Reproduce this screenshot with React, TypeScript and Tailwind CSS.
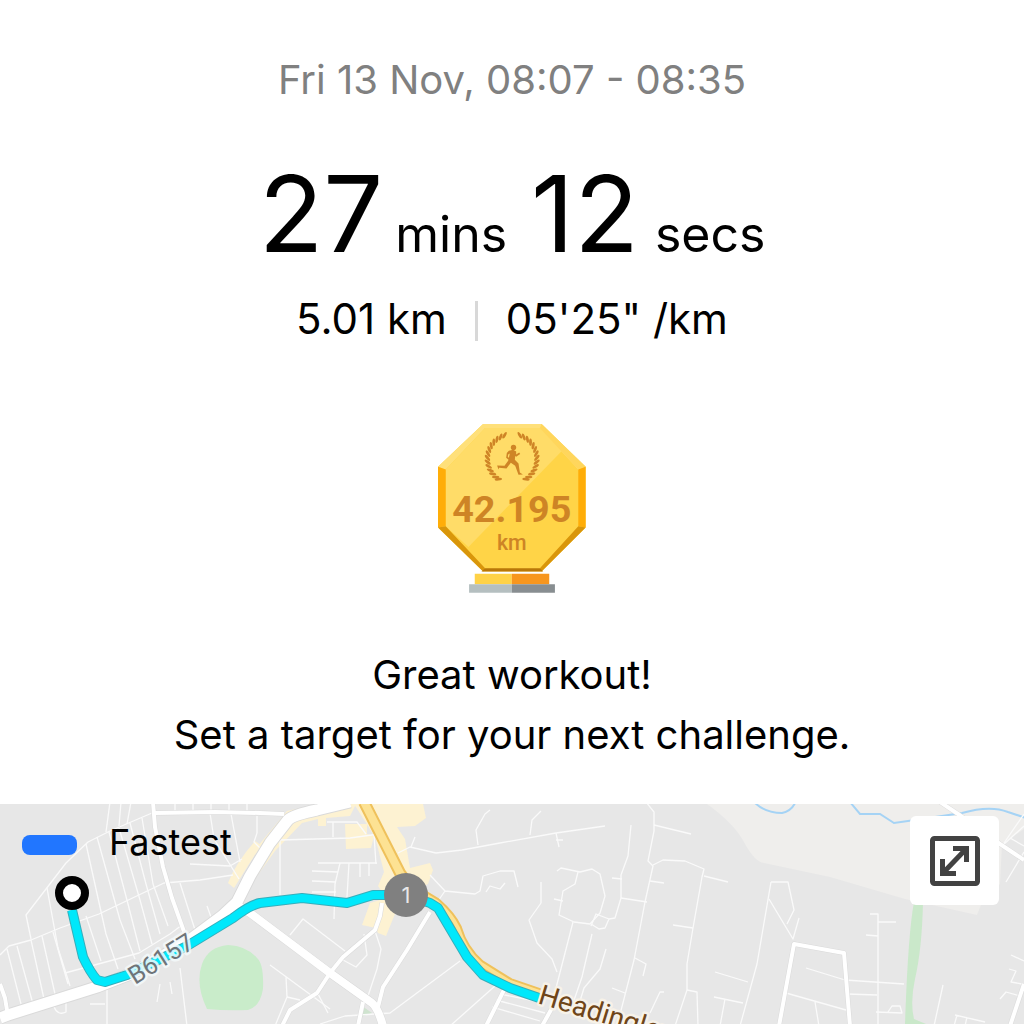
const laurelAngles = [18, 28, 38, 48, 58, 68, 78, 88, 98, 108, 118, 128, 138, 146];

const mainRoad =
  "M0 214 L8 211 L97 183 L133 169 L187 138 L222 112 L237 98 L250 72 L270 39 L288 16 Q293 11 317 6 L350 -2";

const crossRoad = "M235 100 L250 109 L330 169 L372 199 Q378 204 383 222";

const highway = "M364 -2 L400 69 L414 88";

const highwaySouth = "M414 84 L437 98 Q452 111 458 124 Q464 145 481 160 L510 178 L545 190";

const mediumRoads = [
  "M153 -2 L155 23 L163 63 L172 94 L187 136",
  "M155 9 L215 8 L260 9 L284 10",
  "M382 99 L380 112 L375 126 L343 153 L330 169 L317 189 L290 206 L282 222",
  "M430 108 L407 146 L383 183 L378 203",
  "M363 198 L358 222",
  "M779 222 L794 140 L844 149 L850 222",
  "M940 -2 L958 10 L1000 40 L1024 56",
  "M0 180 L5 194 L8 212",
  "M1024 180 L1010 222",
  "M504 186 L486 222",
  "M552 204 L542 222",
];

const streets = [
  // west
  "M152 9 L110 27 L88 38 L66 59 L26 111 L31 135",
  "M0 151 L9 142 L31 136 L60 124 L99 110 L164 79 L200 76 L233 71",
  "M7 145 L22 204 M17 142 L33 200 M31 136 L44 195 M42 132 L55 190 M53 128 L68 180",
  "M47 84 L58 144 L70 182 M86 40 L106 130 L118 165 M97 33 L120 116 L135 155",
  "M109 28 L128 100 L140 147 M119 24 L140 96 L152 140 M130 19 L146 80 L160 130",
  "M142 14 L153 80 L168 122 M110 -2 L106 28 M121 -2 L119 22 M131 -2 L127 20",
  "M65 169 L139 149 L170 130 L182 121 M86 112 L101 157",
  "M107 179 L107 222 M180 164 L187 222 M54 203 Q58 212 66 208 L66 195",
  "M90 200 L105 200 M160 180 L157 198 M170 178 L172 190",
  "M180 79 L196 129 M207 102 L215 124 M175 -2 L175 8 M193 -2 L193 8 M211 -2 L211 8",
  "M229 -2 L229 8 M247 -2 L247 8 M210 9 L214 35 L239 75 M231 10 L240 58 M190 60 L230 62 L242 55",
  // centre
  "M257 12 L257 29 L254 38 L264 48 M280 36 L280 91 M280 36 L350 34 L379 30",
  "M327 18 L357 18 L366 30 M333 18 L333 33 M318 59 L377 59",
  "M312 67 L338 68 M312 77 L336 78 M312 88 L336 88 M340 59 L335 80 L334 115",
  "M349 59 L347 93 M360 59 L360 73 M369 59 L369 72 M374 31 L376 60",
  "M290 131 L303 115 L345 147 M343 156 L356 163 L367 151 L365 137 L364 130",
  "M375 127 L381 145 L377 165 L367 195 M270 161 L330 205 M286 173 L287 193 L275 222",
  "M287 193 L300 196 M317 188 L328 209 M320 220 L345 212 L390 209 L460 157",
  "M398 49 L410 43 L436 49 L462 46 L500 39 L556 29 L605 22",
  "M411 43 L415 33 M478 41 L476 26 L485 10 L490 6 M530 31 L532 16 L541 7",
  "M556 29 L559 43 M556 36 L563 36",
  "M430 71 L445 87 L438 97 M445 87 L475 90 L480 87 L483 72 L500 67 L514 67 L518 83",
  "M486 88 L490 82 L500 85 L505 79",
  "M450 222 L495 182 M500 190 L540 198 M492 203 L540 217 M496 196 L545 209",
  // residential loops
  "M557 67 L561 64 L580 68 L592 65 L600 70 L605 92 L600 109 L590 120 L574 118 L559 111 L563 87 L575 80 L578 68",
  "M591 122 L596 110 L609 115 L605 124 L599 125 L591 120 M609 115 L615 114 L621 94 L621 71 L628 52 L631 21",
  "M612 74 L622 75 M554 95 L563 97 M621 94 L647 98",
  "M541 78 L541 99 L529 116 L537 139 L552 155 L557 168 M573 118 L556 184",
  "M592 130 L582 173 L571 205 M606 145 L600 165 L584 184 L576 210",
  "M646 -2 L654 8 L654 27 L648 57 L653 62 L645 98 L634 156 L617 222",
  "M654 21 L691 30 M650 77 L664 79 M653 61 L663 56 L685 57 L704 65 L702 73 L693 124 L687 160 L687 186 L675 222",
  "M704 72 L728 78 M673 121 L693 124 M635 154 L646 160 L643 172 M612 184 L625 189",
  "M687 186 L697 188 L698 222 M650 209 L660 188 L664 188",
  // east
  "M771 78 L788 78 L794 106 L787 120 M771 78 L757 160 L740 222 M715 168 L748 178 M714 193 L743 199 M725 195 L720 222",
  "M769 95 L793 135 L799 114 M806 164 L845 176 L904 180 M847 190 L877 191",
  "M786 189 L846 206 M815 198 L819 222 M870 110 L878 110 L878 222 M878 118 L896 118 M866 131 L878 132",
  "M876 208 L902 209 L900 202 L892 202 L888 208 M943 181 L934 222",
  "M1024 22 L1002 42 L1024 10 M1010 34 L1024 42 M1024 48 L1006 78",
  "M1011 151 L1024 157 M1009 165 L1016 167 L1011 178 L1022 180 M1000 195 L1006 188 L1020 192",
  "M955 211 L985 218 M957 211 L954 222 M967 213 L965 222",
];

const route =
  "M72 106 L83 153 Q90 168 97 176 L105 178 L127 171 L187 142 L233 114 Q250 101 260 99 L302 94 L347 99 L373 91 L406 91 L430 99 L438 104 L467 153 L483 171 L510 184 L542 195";

function Medal() {
  return (
    <svg viewBox="25 42 443 506" className="h-[169px] w-[148px]" role="img" aria-label="42.195 km medal">
      <path d="M160 42H335L467 170V352L335 484H160L25 352V170Z" fill="#ffd447" />
      <path d="M160 42H335L467 170 445 178 330 54H166L48 178 25 170Z" fill="#ffe07a" />
      <path d="M166 54H330L400 118 116 410 48 348V178Z" fill="#ffdc68" />
      <path d="M335 42L467 170 445 178 330 54Z" fill="#ffd65c" />
      <path d="M25 170L48 178V348L25 352ZM467 170L445 178V348L467 352Z" fill="#ffad08" />
      <path d="M25 352L48 348 166 474 160 484ZM467 352L445 348 330 474 335 484Z" fill="#d9960b" />
      <path d="M166 474H330L340 484H155Z" fill="#b97708" />
      <g fill="#cf8526">
        {laurelAngles.map((angle) => (
          <g key={angle}>
            <g transform={`rotate(${angle} 247 146)`}>
              <ellipse cx="247" cy="72" rx="4.2" ry="11" transform="rotate(-48 247 72)" />
            </g>
            <g transform={`rotate(${-angle} 247 146)`}>
              <ellipse cx="247" cy="72" rx="4.2" ry="11" transform="rotate(48 247 72)" />
            </g>
          </g>
        ))}
        <circle cx="251" cy="112" r="8" />
        <path d="M237 122L250 119 259 124 259 133 268 127 271 132 259 140 256 138 255 149 266 160 270 187 279 193 266 194 256 167 243 158 230 175 208 173 206 178 202 166 224 167 235 152 240 130 235 133 234 141 243 148 240 152 229 143 231 129Z" />
      </g>
      <text x="246" y="335" textAnchor="middle" fontSize="113" fill="#ce8425" className="font-['Roboto',sans-serif] font-bold">42.195</text>
      <text x="246" y="418" textAnchor="middle" fontSize="64" fill="#ce8425" className="font-['Roboto',sans-serif] font-medium">km</text>
      <path d="M135 490H246V522H135Z" fill="#ffd247" />
      <path d="M246 490H358V522H246Z" fill="#f7961e" />
      <path d="M118 522H246V547H118Z" fill="#b5bfc0" />
      <path d="M246 522H375V547H246Z" fill="#888e91" />
    </svg>
  );
}

function RouteMap() {
  return (
    <svg
      viewBox="0 0 1024 220"
      preserveAspectRatio="xMinYMin slice"
      className="absolute inset-0 size-full"
      role="img"
      aria-label="Map of the run"
    >
      <rect width="1024" height="220" fill="#e7e7e7" />
      <path d="M707 0 Q735 20 745 40 Q755 58 764 59 L830 73 L905 95 L977 111 L981 101 L1000 80 L1002 40 L1024 25 V0Z" fill="#efeeec" />
      <path d="M754 -2 Q765 9 782 9 Q792 7 796 -3 M850 -2 L860 10 L880 10 L894 19 L915 16 L962 9 Q990 1 1008 8 L1026 14" fill="none" stroke="#a5d3f5" strokeWidth="2" />
      <path d="M914 98 H923 Q922 145 915 175 Q910 198 914 215 L926 220 H905 Q908 130 914 98Z" fill="#cae8ca" />
      <path d="M207 205 Q195 180 202 160 Q208 143 228 141 Q247 142 257 154 Q264 160 263 185 Q260 203 248 206 Q226 207 207 205Z" fill="#c9ecca" />
      <path d="M362 202 L372 209 L361 213Z" fill="#cfe3cf" />
      <g fill="#fdf2d2">
        <path d="M255 37 L261 41 L234 84 L228 79 Q235 60 255 37Z" />
        <path d="M247 86 L275 47 L302 19 L318 15 V22 H326 V14 L350 12 L356 0 H318 L287 7 L258 42 L245 84Z" />
        <path d="M345 20 H367 V30 L374 32 L371 44 L346 45Z" />
        <path d="M354 0 H423 L426 14 L415 22 L397 23 L405 35 L410 64 L430 59 L433 66 L428 80 L390 100 L378 82 L384 68 L375 33Z" />
        <path d="M370 99 L390 93 L397 105 L386 132 L378 129 L376 124 L362 121Z" />
      </g>
      <g fill="none" strokeLinejoin="round">
        {streets.map((d) => (
          <path key={d} d={d} stroke="#fafafa" strokeWidth="1.3" />
        ))}
        {mediumRoads.map((d) => (
          <path key={d} d={d} stroke="#dadada" strokeWidth="5" />
        ))}
        <path d={mainRoad} stroke="#dadada" strokeWidth="13" />
        <path d={crossRoad} stroke="#dadada" strokeWidth="9" />
        {mediumRoads.map((d) => (
          <path key={d} d={d} stroke="#fff" strokeWidth="4" />
        ))}
        <path d={crossRoad} stroke="#fff" strokeWidth="8" />
        <path d={mainRoad} stroke="#fff" strokeWidth="11" />
        <path d={highway} stroke="#efc15b" strokeWidth="12" />
        <path d={highway} stroke="#fde293" strokeWidth="8" />
        <path d={highwaySouth} stroke="#efc15b" strokeWidth="8" />
        <path d={highwaySouth} stroke="#fde293" strokeWidth="4" />
        <path d={route} stroke="#35aebb" strokeWidth="10" />
        <path d={route} stroke="#00e8fb" strokeWidth="8" />
      </g>
      <circle cx="72" cy="89" r="13" fill="#fff" stroke="#000" strokeWidth="8" />
      <circle cx="406" cy="91" r="22" fill="#808080" />
      <text x="406" y="99" textAnchor="middle" fontSize="22" fill="#e8e8e8">1</text>
      <g strokeWidth="5" strokeLinejoin="round" className="font-['Roboto',sans-serif] [paint-order:stroke]">
        <text x="135" y="181" fontSize="25" fill="#6e7479" stroke="#f4f9fa" strokeOpacity="0.85" transform="rotate(-32 135 181)">B6157</text>
        <text x="537" y="199" fontSize="28" fill="#6f4518" stroke="#f7f2e8" transform="rotate(17 537 199)">Headingley</text>
      </g>
    </svg>
  );
}

function ExpandIcon() {
  return (
    <svg viewBox="0 0 50 50" className="size-[50px]" fill="none" stroke="#424242" strokeWidth="5" aria-hidden="true">
      <rect x="2.5" y="2.5" width="45" height="45" rx="2" />
      <path d="M12.5 37.5L36.5 12.5M23 12.5H36.5V26M12.5 23V37.5H26" />
    </svg>
  );
}

function App() {
  return (
    <div className="flex min-h-screen flex-col bg-white font-['Inter',sans-serif] text-black">
      <header className="flex flex-col items-center pt-[52px] text-center">
        <p className="text-[40px] leading-14 text-[#808080]">Fri 13 Nov, 08:07 - 08:35</p>
        <h1 className="mt-[53px] flex items-baseline text-[50px] leading-none">
          <span className="text-[106px] leading-none">27</span>
          <span className="ml-3">mins</span>
          <span className="ml-6 text-[106px] leading-none">12</span>
          <span className="ml-4">secs</span>
        </h1>
        <div className="mt-6 flex items-center text-[42px] leading-14">
          <span>5.01 km</span>
          <span className="mx-7 mt-1 h-10 w-[3px] bg-[#d8d8d8]" />
          <span>05'25" /km</span>
        </div>
      </header>

      <main className="flex flex-1 flex-col">
        <div className="mt-[77px] flex justify-center">
          <Medal />
        </div>
        <p className="mt-[52px] mb-[39px] text-center text-[40px] leading-[60px]">
          Great workout!
          <br />
          Set a target for your next challenge.
        </p>

        <section className="relative min-h-[220px] flex-1 overflow-hidden">
          <RouteMap />
          <div className="absolute top-4 left-[22px] flex items-center gap-8">
            <span className="mt-1.5 h-5 w-[55px] rounded-lg bg-[#2176ff]" />
            <span className="text-[36px] leading-11">Fastest</span>
          </div>
          <button
            type="button"
            aria-label="Expand map"
            className="absolute top-3 right-[25px] flex size-[89px] items-center justify-center rounded-md bg-white"
          >
            <ExpandIcon />
          </button>
        </section>
      </main>
    </div>
  );
}

export default App;
